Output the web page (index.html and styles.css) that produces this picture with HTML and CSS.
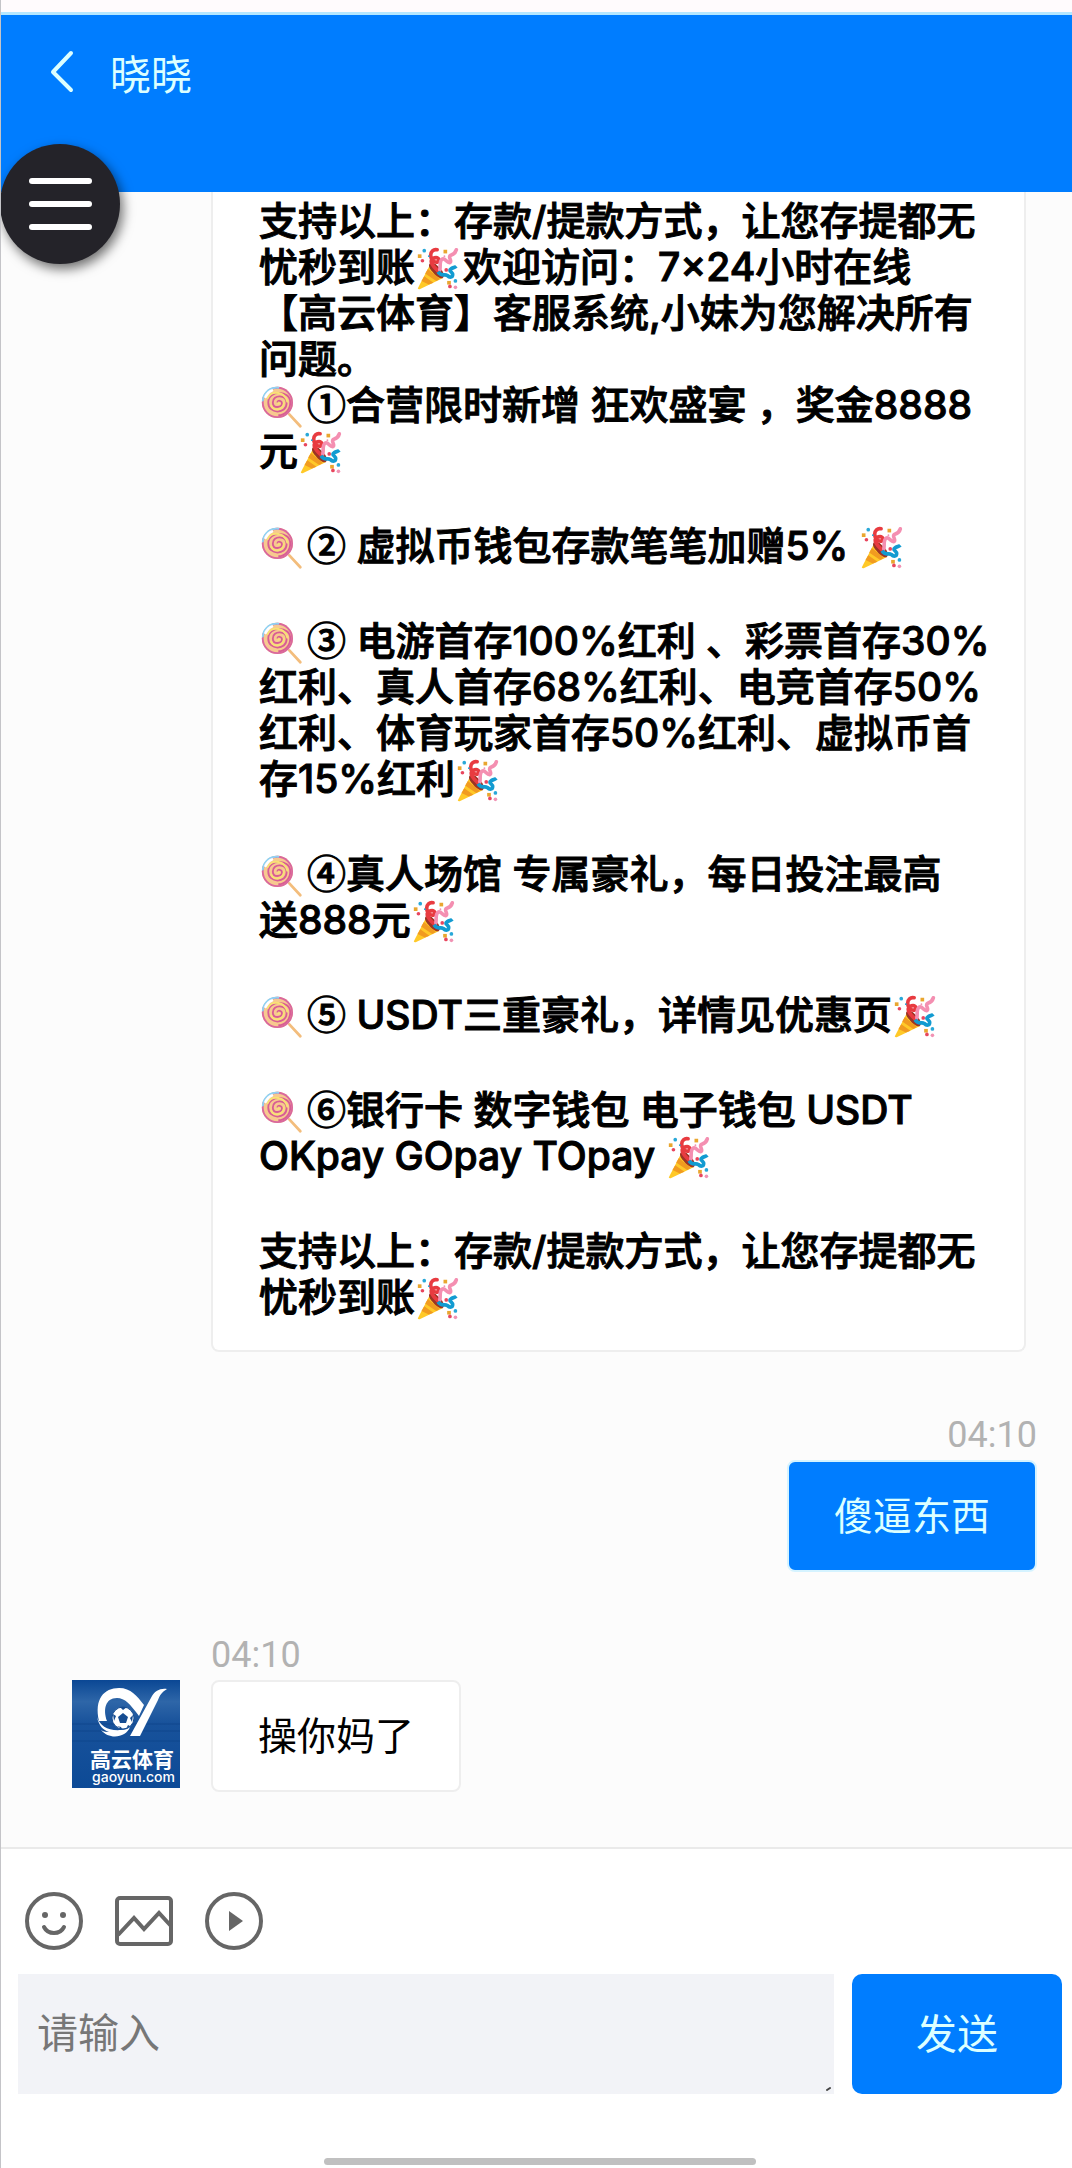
FILE: index.html
```
<!DOCTYPE html>
<html lang="zh-CN">
<head>
<meta charset="UTF-8">
<meta name="viewport" content="width=device-width, initial-scale=1.0">
<title>晓晓</title>
<link rel="stylesheet" href="styles.css">
</head>
<body>
<svg class="sprite" aria-hidden="true">
  <symbol id="lollipop" viewBox="0 0 48 48">
    <path d="M32 32L44 45" stroke="#f3bd7c" stroke-width="3" stroke-linecap="round"/>
    <circle cx="19" cy="19" r="17" fill="#f7c98f"/>
    <circle cx="19" cy="19" r="16" fill="none" stroke="#d9679f" stroke-width="2"/>
    <path d="M19 19c0-3 5-2 5 1 0 5-10 6-10-1 0-9 15-9 15 1 0 12-20 12-20-1 0-14 24-14 24 0 0 8-6 14-13 14" fill="none" stroke="#d85c94" stroke-width="2"/>
    <path d="M19 20c2 1 2-1 1-1M12 22c4 9 15 4 14-4M8 15c5-11 20-7 22 4" fill="none" stroke="#f8e275" stroke-width="2"/>
    <path d="M3 17C4 8 11 2 20 3" fill="none" stroke="#8fd3f3" stroke-width="2" stroke-linecap="round"/>
    <path d="M6 13C8 9 10 7 13 6" fill="none" stroke="#fff" stroke-width="3" stroke-linecap="round"/>
  </symbol>
  <symbol id="party" viewBox="0 0 48 48">
    <path d="M16 18L2 45c0 1 1 1 2 1l25-12z" fill="#ffc928"/>
    <path d="M9 32l10 7-5 2-8-4zM13 24l13 11-4 2-12-8z" fill="#f19b20"/>
    <path d="M15 18c2-3 7 0 11 5 4 4 6 9 3 11-3 1-8-3-11-7-3-3-5-7-3-9z" fill="#9b3425"/>
    <path d="M24 26C17 20 15 15 18 13c5-3 9 0 6 3-3 2-8-2-8-7 0-4 3-7 7-6" fill="none" stroke="#e83b40" stroke-width="4" stroke-linecap="round"/>
    <path d="M26 25c1-5-1-10 3-12 3-1 5 5 8 4 3-2-3-6 1-8 3-1 5-2 6-6" fill="none" stroke="#f48fb1" stroke-width="4" stroke-linecap="round"/>
    <path d="M24 27c4 6 7 2 10 4 3 3 6 2 6-1 0-3-5-4-2-6 2-2 4-1 6-3" fill="none" stroke="#129bd1" stroke-width="4"/>
    <g fill="#e9a62f"><rect x="2" y="8" width="4" height="4"/><rect x="30" y="3" width="4" height="4"/><rect x="34" y="37" width="4" height="4"/></g>
    <g fill="#29a8d8"><circle cx="9" cy="4" r="2"/><circle cx="14" cy="10" r="1"/><circle cx="43" cy="37" r="2"/></g>
    <g fill="#e8465e"><circle cx="7" cy="15" r="2"/><circle cx="33" cy="25" r="2"/><circle cx="37" cy="43" r="2"/></g>
    <g fill="#f193b4"><circle cx="43" cy="44" r="2"/><circle cx="31" cy="10" r="1"/></g>
  </symbol>
</svg>

<header class="topbar">
  <button class="back" aria-label="返回">
    <svg width="24" height="44" viewBox="0 0 24 44"><path d="M21 3L3 22l18 18" fill="none" stroke="currentColor" stroke-width="4" stroke-linecap="round" stroke-linejoin="round"/></svg>
  </button>
  <h1>晓晓</h1>
  <button class="menu" aria-label="菜单"><span></span><span></span><span></span></button>
</header>

<main class="chat">
  <div class="row">
    <div class="bubble promo">
      <p>支持以上：存款/提款方式，让您存提都无<br>
        忧秒到账<svg class="emoji"><use href="#party"/></svg>欢迎访问：7×24小时在线<br>
        【高云体育】客服系统,小妹为您解决所有<br>
        问题。<br>
        <svg class="emoji"><use href="#lollipop"/></svg><span class="num">①</span>合营限时新增 狂欢盛宴 ，奖金8888<br>
        元<svg class="emoji"><use href="#party"/></svg></p>
      <p><svg class="emoji"><use href="#lollipop"/></svg><span class="num">②</span> 虚拟币钱包存款笔笔加赠5% <svg class="emoji"><use href="#party"/></svg></p>
      <p><svg class="emoji"><use href="#lollipop"/></svg><span class="num">③</span> 电游首存100%红利 、彩票首存30%<br>
        红利、真人首存68%红利、电竞首存50%<br>
        红利、体育玩家首存50%红利、虚拟币首<br>
        存15%红利<svg class="emoji"><use href="#party"/></svg></p>
      <p><svg class="emoji"><use href="#lollipop"/></svg><span class="num">④</span>真人场馆 专属豪礼，每日投注最高<br>
        送888元<svg class="emoji"><use href="#party"/></svg></p>
      <p><svg class="emoji"><use href="#lollipop"/></svg><span class="num">⑤</span> USDT三重豪礼，详情见优惠页<svg class="emoji"><use href="#party"/></svg></p>
      <p><svg class="emoji"><use href="#lollipop"/></svg><span class="num">⑥</span>银行卡 数字钱包 电子钱包 USDT<br>
        OKpay GOpay TOpay <svg class="emoji"><use href="#party"/></svg></p>
      <p>支持以上：存款/提款方式，让您存提都无<br>
        忧秒到账<svg class="emoji"><use href="#party"/></svg></p>
    </div>
  </div>

  <div class="row mine">
    <time>04:10</time>
    <div class="bubble">傻逼东西</div>
  </div>

  <div class="row">
    <time>04:10</time>
    <div class="line">
      <svg class="avatar" viewBox="0 0 108 108" role="img" aria-label="高云体育">
        <defs>
          <linearGradient id="sky" x1="0" y1="0" x2="0" y2="1">
            <stop offset="0" stop-color="#0a4794"/>
            <stop offset=".2" stop-color="#2e66a8"/>
            <stop offset=".4" stop-color="#18529b"/>
            <stop offset="1" stop-color="#0d4a96"/>
          </linearGradient>
        </defs>
        <rect width="108" height="108" fill="url(#sky)"/>
        <path d="M0 44h108M0 51h108M0 61h108" stroke="#0b3f82" opacity=".5"/>
        <path d="M58 56L80 16c3-5 8-8 15-7-5 3-7 6-9 11L68 56z" fill="#fff"/>
        <path d="M27 41C22 19 32 8 47 8c12 0 18 8 25 17l-5 11C58 24 53 18 45 18c-12 0-14 12-10 23z" fill="#fff"/>
        <path d="M25 37c3 9 11 14 24 13 4 0 7-1 9-3-4 11-21 13-29 3 3 2 6 2 8 2-6-2-10-6-12-15z" fill="#fff"/>
        <circle cx="51" cy="38" r="11" fill="#fff" stroke="#164c91"/>
        <path d="M51 33l5 4-2 6h-6l-2-6zM48 27h7l-4 3zM41 34l3 2-2 5zM61 35l-3 3 2 4zM45 46l4 1 1 2zM56 45l-2 4 4-3z" fill="#164c91"/>
        <text class="logo-name" x="18" y="87">高云体育</text>
        <text class="logo-url" x="20" y="102">gaoyun.com</text>
      </svg>
      <div class="bubble">操你妈了</div>
    </div>
  </div>
</main>

<footer class="composer">
  <div class="tools">
    <button aria-label="表情">
      <svg viewBox="0 0 58 58"><circle cx="29" cy="29" r="27"/><path d="M19 35c4 8 16 8 20 0" stroke-linecap="round"/><g class="solid"><circle cx="20" cy="23" r="3"/><circle cx="38" cy="23" r="3"/></g></svg>
    </button>
    <button aria-label="图片">
      <svg viewBox="0 0 58 58"><rect x="2" y="6" width="54" height="46" rx="3"/><path d="M3 43l16-17 10 11 15-16 12 13"/></svg>
    </button>
    <button aria-label="视频">
      <svg viewBox="0 0 58 58"><circle cx="29" cy="29" r="27"/><path class="solid" d="M24 19v20l14-10z"/></svg>
    </button>
  </div>
  <form class="entry">
    <div class="field">
      <textarea placeholder="请输入" aria-label="请输入"></textarea>
      <svg class="grip" width="6" height="6" viewBox="0 0 6 6"><path d="M1 4l3-2" stroke="#444" stroke-width="2" stroke-linecap="round"/></svg>
    </div>
    <button class="send" type="button">发送</button>
  </form>
  <div class="homebar"></div>
</footer>
</body>
</html>
```
FILE: styles.css
```
* {
  box-sizing: border-box;
}
body {
  margin: 0;
  min-height: 100vh;
  display: flex;
  flex-direction: column;
  background: #fcfcfc;
  border-left: 1px solid #c4c4c8;
  font-family: Inter, "Noto Sans CJK SC", sans-serif;
  font-size: 39px;
  line-height: 46px;
  color: #000;
}
button {
  border: 0;
  padding: 0;
  background: none;
  font: inherit;
  cursor: pointer;
}
.sprite {
  position: absolute;
  width: 0;
  height: 0;
}

.topbar {
  position: relative;
  display: flex;
  align-items: flex-start;
  gap: 36px;
  height: 192px;
  padding: 38px 49px;
  background: #007dff;
  border-top: 12px solid #fffbfd;
  box-shadow: inset 0 3px #b5e7ff;
  color: #dcffff;
}
.topbar h1 {
  margin: 0;
  font-size: 41px;
  font-weight: 400;
  line-height: 50px;
}
.back {
  display: flex;
  color: inherit;
}
.menu {
  position: absolute;
  left: -1px;
  bottom: -72px;
  width: 120px;
  height: 120px;
  border-radius: 50%;
  background: #242329;
  box-shadow: 3px 5px 12px #00000090;
  display: flex;
  flex-direction: column;
  align-items: center;
  justify-content: center;
  gap: 17px;
}
.menu span {
  width: 63px;
  height: 6px;
  border-radius: 3px;
  background: #fff;
}

.chat {
  flex: 1;
  padding: 0 35px 54px 71px;
  display: flex;
  flex-direction: column;
  gap: 58px;
}
.row {
  display: flex;
  flex-direction: column;
  align-items: flex-start;
  padding-left: 139px;
}
.row.mine {
  align-items: flex-end;
}
.row time {
  font-family: Roboto, sans-serif;
  font-size: 36px;
  line-height: 50px;
  color: #b2b2b2;
}
.bubble {
  padding: 31px 45px;
  border: 2px solid #eee;
  border-radius: 8px;
  background: #fff;
}
.mine .bubble {
  background: #007dff;
  border-color: #d5f3ff;
  color: #dcffff;
}
.promo {
  display: flex;
  flex-direction: column;
  gap: 49px;
  align-self: stretch;
  margin-right: 11px;
  padding: 6px 46px 30px;
  border-top: 0;
  border-radius: 0 0 8px 8px;
  font-weight: 500;
  -webkit-text-stroke: 1px #000;
  white-space: nowrap;
}
.promo p {
  margin: 0;
}
.num {
  display: inline-block;
  font-family: "Noto Sans CJK SC", sans-serif;
  line-height: 40px;
}
.emoji {
  width: 46px;
  height: 44px;
  margin-right: 2px;
  vertical-align: -2px;
  margin-block: -8px;
}
.line {
  display: flex;
  align-items: flex-start;
  gap: 31px;
  margin-left: -139px;
}
.avatar {
  width: 108px;
  height: 108px;
}
.logo-name {
  fill: #fff;
  font-size: 21px;
  font-weight: 700;
}
.logo-url {
  fill: #fff;
  font-size: 14px;
  font-weight: 500;
}

.composer {
  background: #fff;
  border-top: 2px solid #eaeaea;
  padding: 43px 10px 3px 17px;
}
.tools {
  display: flex;
  gap: 32px;
  padding-left: 7px;
}
.tools button {
  display: flex;
}
.tools svg {
  width: 58px;
  height: 58px;
  fill: none;
  stroke: #666;
  stroke-width: 4;
}
.tools .solid {
  fill: #666;
  stroke: none;
}
.entry {
  display: flex;
  gap: 18px;
  margin-top: 24px;
}
.field {
  position: relative;
  flex: 1;
  display: flex;
}
.field textarea {
  flex: 1;
  height: 120px;
  padding: 34px 19px;
  border: 0;
  resize: none;
  background: #f2f3f7;
  font: inherit;
  font-size: 41px;
  line-height: 50px;
}
.field textarea::placeholder {
  color: #777;
}
.grip {
  position: absolute;
  right: 2px;
  bottom: 2px;
}
.send {
  width: 210px;
  border-radius: 10px;
  background: #007dff;
  color: #dcffff;
  font-size: 41px;
}
.homebar {
  width: 432px;
  height: 7px;
  margin: 64px auto 0;
  border-radius: 4px;
  background: #c0c0c0;
}
```
